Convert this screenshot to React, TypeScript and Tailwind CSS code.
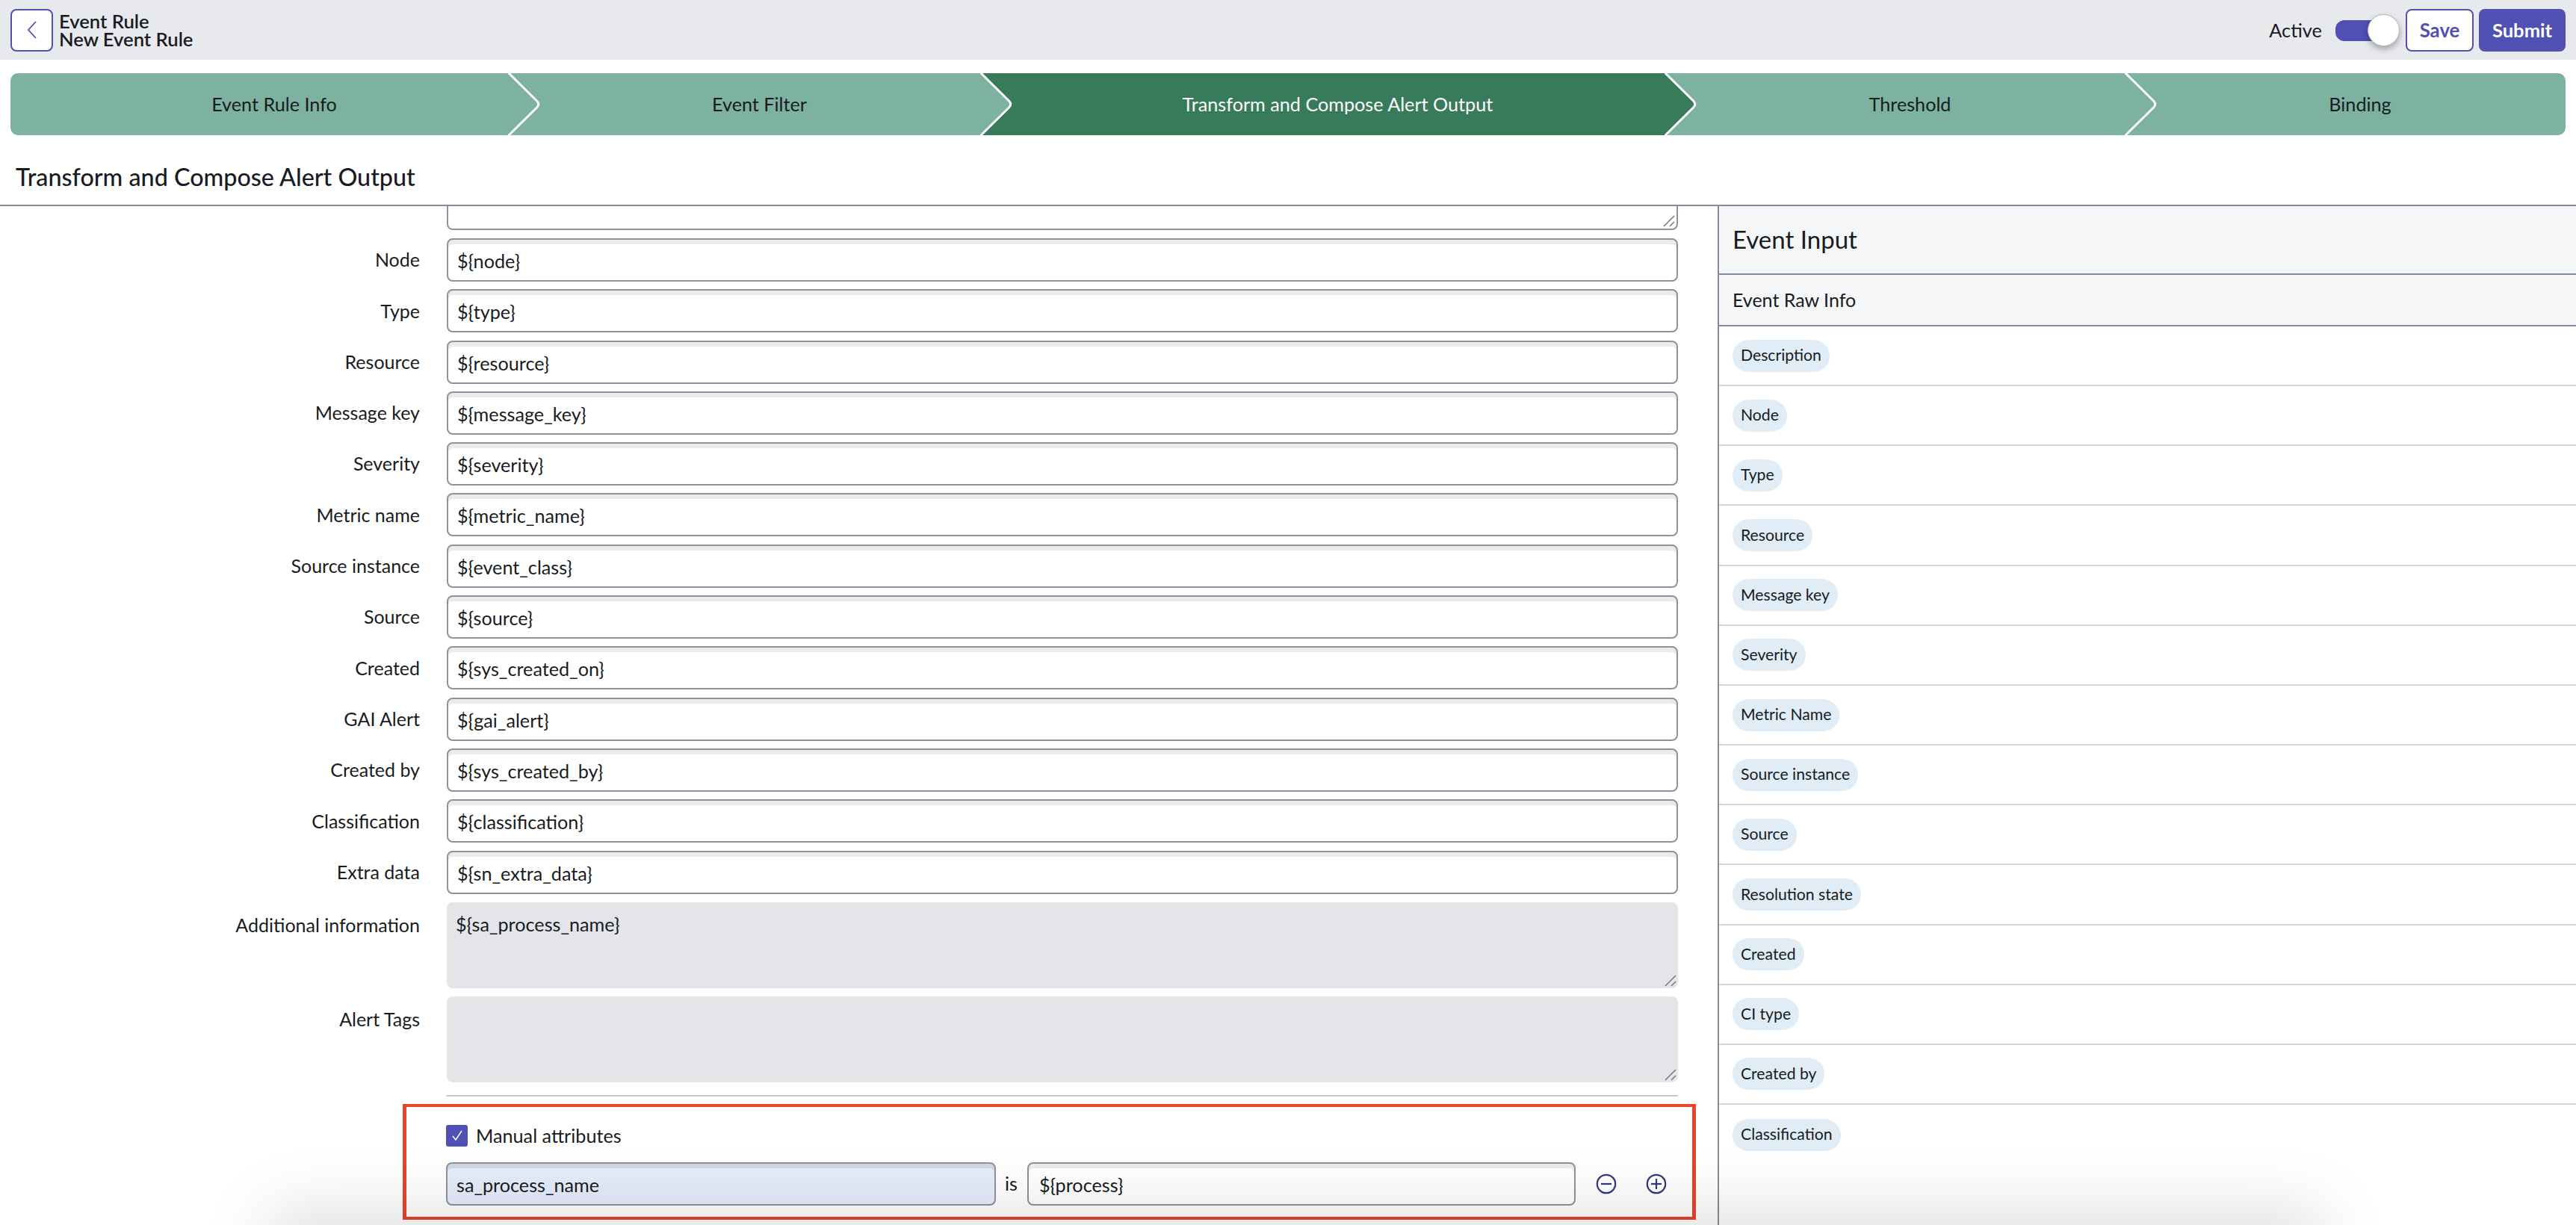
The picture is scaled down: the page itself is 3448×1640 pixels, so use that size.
import React from "react";

const steps = [
  { label: "Event Rule Info", w: "w-[667px]", z: "z-[5]" },
  { label: "Event Filter", w: "w-[632px]", z: "z-[4]" },
  { label: "Transform and Compose Alert Output", w: "w-[916px]", z: "z-[3]", active: true },
  { label: "Threshold", w: "w-[616px]", z: "z-[2]" },
  { label: "Binding", w: "w-[589px]", z: "z-[1]", last: true },
];

const fields = [
  ["Node", "${node}"],
  ["Type", "${type}"],
  ["Resource", "${resource}"],
  ["Message key", "${message_key}"],
  ["Severity", "${severity}"],
  ["Metric name", "${metric_name}"],
  ["Source instance", "${event_class}"],
  ["Source", "${source}"],
  ["Created", "${sys_created_on}"],
  ["GAI Alert", "${gai_alert}"],
  ["Created by", "${sys_created_by}"],
  ["Classification", "${classification}"],
  ["Extra data", "${sn_extra_data}"],
];

const pills = [
  "Description",
  "Node",
  "Type",
  "Resource",
  "Message key",
  "Severity",
  "Metric Name",
  "Source instance",
  "Source",
  "Resolution state",
  "Created",
  "CI type",
  "Created by",
  "Classification",
];

function ResizeHandle() {
  return (
    <svg className="absolute right-[2px] bottom-[2px]" width="16" height="16" viewBox="0 0 16 16" fill="none" stroke="#6f7280" strokeWidth="1.5">
      <path d="M1 15 L15 1" />
      <path d="M9 15 L15 9" />
    </svg>
  );
}

function Stepper() {
  return (
    <div className="mx-[14px] mt-[18px] flex h-[83px] shrink-0">
      {steps.map((s, i) => {
        const fill = s.active ? "#377b5b" : "#7eb2a0";
        return (
          <div
            key={s.label}
            className={`relative flex items-center justify-center pl-[39px] text-[25.2px] ${s.w} ${s.z} ${s.active ? "bg-[#377b5b] text-white" : "bg-[#7eb2a0] text-[#181b22]"} ${i === 0 ? "rounded-l-[10px]" : ""} ${s.last ? "rounded-r-[10px]" : ""}`}
          >
            {s.label}
            {!s.last && (
              <svg className="absolute left-full top-0 -ml-[1px]" width="46" height="83" viewBox="0 0 46 83">
                <path d="M0 0 L38 37 Q42.5 41.5 38 46 L0 83 Z" fill={fill} stroke="none" />
                <path d="M0 -1 L38.5 37 Q43 41.5 38.5 46 L0 84" fill="none" stroke="#ffffff" strokeWidth="3" />
              </svg>
            )}
          </div>
        );
      })}
    </div>
  );
}

function Field({ value, className = "" }: { value: string; className?: string }) {
  return (
    <input
      readOnly
      value={value}
      className={`h-[58px] min-w-0 rounded-[8px] border-2 border-[#8f929d] px-[12px] pt-[2px] text-[25.2px] text-[#181b22] outline-none ${className}`}
    />
  );
}

function Row({ label, children, labelClass = "items-center" }: { label: string; children: React.ReactNode; labelClass?: string }) {
  return (
    <div className={`flex gap-[36px] ${labelClass}`}>
      <div className="w-[562px] shrink-0 text-right text-[25px] text-[#181b22]">{label}</div>
      {children}
    </div>
  );
}

function DisabledArea({ value }: { value?: string }) {
  return (
    <div className="relative h-[115px] w-[1648px] rounded-[8px] bg-[#e3e5e9] px-[12px] py-[14px] text-[25.2px] leading-[30px] text-[#181b22]">
      {value}
      <ResizeHandle />
    </div>
  );
}

function CircleIcon({ plus }: { plus?: boolean }) {
  return (
    <svg width="28" height="28" viewBox="0 0 28 28" fill="none" stroke="#34367f" strokeWidth="2.2">
      <circle cx="14" cy="14" r="12.2" />
      <path d="M7 14 H21" />
      {plus && <path d="M14 7 V21" />}
    </svg>
  );
}

export default function App() {
  return (
    <div className="relative flex h-[1640px] w-[3448px] flex-col overflow-hidden bg-white font-['Lato',sans-serif] text-[#181b22]">
      <header className="flex h-[80px] shrink-0 items-center bg-[#e8e9ed] pl-[14px] pr-[14px]">
        <button className="flex h-[57px] w-[57px] items-center justify-center rounded-[8px] border-2 border-[#5050b5] bg-white">
          <svg width="16" height="26" viewBox="0 0 16 26" fill="none" stroke="#5050b5" strokeWidth="1.8">
            <path d="M13 2 L3 13 L13 24" />
          </svg>
        </button>
        <div className="ml-[8px] flex flex-col text-[25.6px] font-semibold leading-[24px] text-[#181b22]">
          <span>Event Rule</span>
          <span>New Event Rule</span>
        </div>
        <div className="ml-auto flex items-center">
          <span className="mr-[18px] text-[25.4px]">Active</span>
          <div className="relative mr-[8px] h-[43px] w-[86px]">
            <div className="absolute left-0 top-[8px] h-[28px] w-[66px] rounded-[12px] bg-[#5050b5]" />
            <div className="absolute right-0 top-0 h-[43px] w-[43px] rounded-full border border-[#b0b3bd] bg-white shadow-[0_4px_8px_rgba(0,0,0,0.3)]" />
          </div>
          <button className="h-[57px] w-[91px] rounded-[8px] border-2 border-[#5050b5] bg-white text-[25.8px] font-bold text-[#5050b5]">Save</button>
          <button className="ml-[7px] h-[57px] w-[116px] rounded-[8px] bg-[#5050b5] text-[25.6px] font-bold text-white">Submit</button>
        </div>
      </header>

      <Stepper />

      <div className="flex h-[95px] shrink-0 items-center border-b-2 border-[#868b9c] pl-[21px] pt-[19px] text-[32.3px] font-medium">
        Transform and Compose Alert Output
      </div>

      <main className="flex min-h-0 flex-1">
        <section className="flex w-[2299px] shrink-0 flex-col">
          <div className="relative ml-[598px] h-[32px] w-[1648px] rounded-b-[8px] border-2 border-t-0 border-[#8f929d]">
            <ResizeHandle />
          </div>
          <div className="mt-[11px] flex flex-col gap-[10.3px]">
            {fields.map(([label, value]) => (
              <Row key={label} label={label}>
                <Field value={value} className="w-[1648px] bg-white shadow-[inset_0_6px_0_#e9ebed]" />
              </Row>
            ))}
          </div>
          <div className="mt-[11px]">
            <Row label="Additional information" labelClass="items-start [&>div:first-child]:pt-[12px]">
              <DisabledArea value="${sa_process_name}" />
            </Row>
          </div>
          <div className="mt-[11px]">
            <Row label="Alert Tags" labelClass="items-start [&>div:first-child]:pt-[12px]">
              <DisabledArea />
            </Row>
          </div>
          <hr className="ml-[597px] mt-[17px] w-[1649px] border-t-2 border-[#c9cbd3]" />
          <div className="ml-[539px] mt-[10px] h-[155px] w-[1731px] border-x-[5px] border-y-[4px] border-[#e9432a] pl-[53px] pt-[24px]">
            <label className="flex items-center gap-[11px] text-[25.2px] leading-[29px]">
              <span className="flex h-[29px] w-[29px] items-center justify-center rounded-[3px] bg-[#5050b5]">
                <svg width="18" height="18" viewBox="0 0 18 18" fill="none" stroke="#ffffff" strokeWidth="1.5">
                  <path d="M3 10 L7 15 L15 3" />
                </svg>
              </span>
              Manual attributes
            </label>
            <div className="mt-[21px] flex items-center">
              <Field value="sa_process_name" className="w-[736px] bg-[#e6edfa] shadow-[inset_0_6px_0_#cfd6e4]" />
              <span className="ml-[12px] text-[25.2px]">is</span>
              <Field value="${process}" className="ml-[13px] w-[734px] bg-white pl-[14px] shadow-[inset_0_6px_0_#e9ebed]" />
              <span className="ml-[27px] flex"><CircleIcon /></span>
              <span className="ml-[39px] flex"><CircleIcon plus /></span>
            </div>
          </div>
        </section>

        <aside className="flex-1 border-l-2 border-[#868b9c]">
          <div className="flex h-[92px] items-center border-b-2 border-[#868b9c] bg-[#f5f6f8] pl-[18px] text-[33px]">Event Input</div>
          <div className="flex h-[69px] items-center border-b-2 border-[#868b9c] bg-[#f5f6f8] pl-[18px] text-[25px]">Event Raw Info</div>
          {pills.map((p, i) => (
            <div key={p} className={`flex h-[80.17px] items-center pl-[18px] ${i < pills.length - 1 ? "border-b-2 border-[#d5d7de]" : ""}`}>
              <span className="flex h-[43px] items-center rounded-full bg-[#e0ecf6] px-[11px] text-[21.2px]">{p}</span>
            </div>
          ))}
        </aside>
      </main>

      <div className="pointer-events-none absolute left-[400px] right-[380px] top-[1660px] h-[40px] shadow-[0_0_90px_40px_rgba(0,0,0,0.13)]" />
    </div>
  );
}
